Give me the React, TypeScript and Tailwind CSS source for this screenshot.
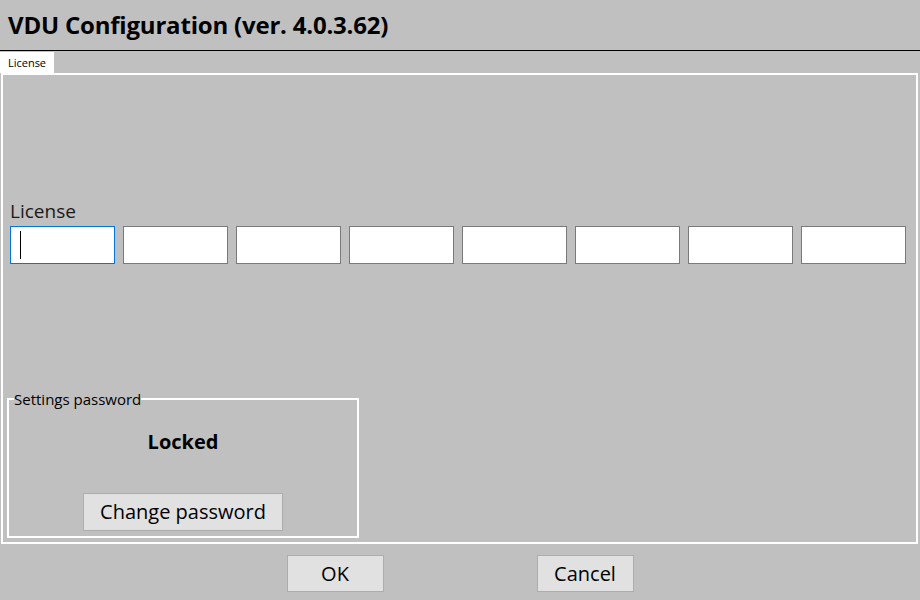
import React from "react";

const font = { fontFamily: '"Open Sans", "Noto Sans", sans-serif' };

const LicenseBox = ({ focused }: { focused?: boolean }) => (
  <div
    className={
      "relative w-[105px] h-[38px] bg-white border " +
      (focused ? "border-[#0078d7]" : "border-[#7a7a7a]")
    }
  >
    {focused && <div className="absolute left-[9px] top-[4px] w-px h-[28px] bg-black" />}
  </div>
);

export default function App() {
  return (
    <div
      className="w-[920px] h-[600px] bg-[#c0c0c0] flex flex-col text-black overflow-hidden"
      style={font}
    >
      {/* title */}
      <div className="h-[51px] border-b border-black flex items-center pl-[8px]">
        <h1 className="text-[24px] font-bold leading-none tracking-[-0.2px]">
          VDU Configuration (ver. 4.0.3.62)
        </h1>
      </div>

      {/* tab strip */}
      <div className="h-[22px] flex items-end">
        <div className="w-[54px] h-[21px] bg-white flex items-center justify-center text-[11px] leading-none">
          License
        </div>
      </div>

      {/* tab page */}
      <div className="ml-[1px] w-[917px] h-[471px] border-2 border-white flex flex-col px-[7px]">
        <div className="mt-[124px] h-[24px] text-[19px] leading-[24px] text-[#1a1a1a]">
          License
        </div>
        <div className="mt-[3px] flex gap-2">
          <LicenseBox focused />
          <LicenseBox />
          <LicenseBox />
          <LicenseBox />
          <LicenseBox />
          <LicenseBox />
          <LicenseBox />
          <LicenseBox />
        </div>

        <div className="flex-1" />

        <fieldset className="-ml-[3px] w-[352px] h-[148px] border-2 border-white mb-[4px] flex flex-col items-center">
          <legend className="ml-[5px] text-[15px] leading-[18px]">Settings password</legend>
          <div className="mt-[20px] text-[20px] font-bold leading-[28px]">Locked</div>
          <button className="mt-[37px] w-[200px] h-[38px] bg-[#e1e1e1] border border-[#adadad] text-[20px] leading-none">
            Change password
          </button>
        </fieldset>
      </div>

      {/* dialog buttons */}
      <div className="mt-[11px] flex justify-center gap-[153px]">
        <button className="w-[97px] h-[37px] bg-[#e1e1e1] border border-[#adadad] text-[20px] leading-none">
          OK
        </button>
        <button className="w-[97px] h-[37px] bg-[#e1e1e1] border border-[#adadad] text-[20px] leading-none">
          Cancel
        </button>
      </div>
    </div>
  );
}
